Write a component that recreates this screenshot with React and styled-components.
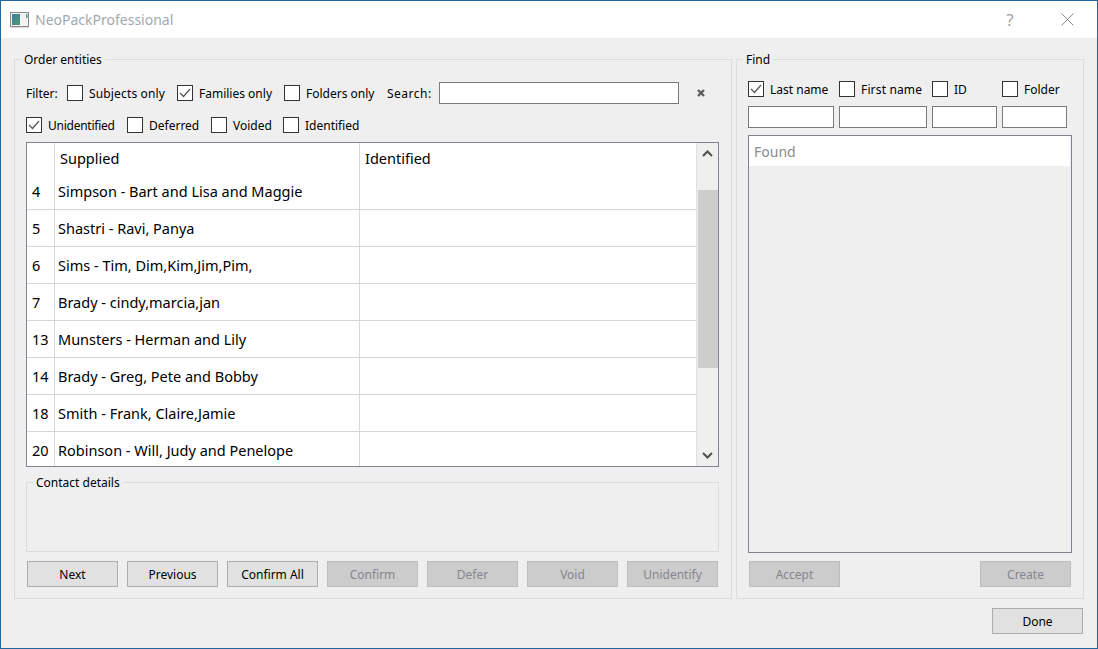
import React from 'react'
import styled, { createGlobalStyle } from 'styled-components'

const GlobalStyle = createGlobalStyle`
  html, body {
    margin: 0;
    padding: 0;
    background: #efefef;
  }
  * {
    box-sizing: border-box;
  }
`;

const Window = styled.div`
  width: 1098px;
  height: 649px;
  display: flex;
  flex-direction: column;
  overflow: hidden;
  border: 1px solid #20659c;
  background: #efefef;
  color: #000;
  font-family: "Noto Sans", "Liberation Sans", sans-serif;
  font-size: 12px;
`;

const TitleBar = styled.div`
  height: 37px;
  flex: none;
  display: flex;
  align-items: center;
  background: #fff;
  padding-left: 9px;
`;

const TitleText = styled.span`
  margin-left: 5px;
  font-size: 14px;
  color: #a3a8ae;
`;

const HelpBtn = styled.span`
  margin-left: auto;
  width: 54px;
  text-align: center;
  font-size: 16px;
  color: #a0a0a0;
`;

const CloseBtn = styled.span`
  width: 60px;
  display: flex;
  justify-content: center;
`;

const Content = styled.div`
  flex: 1;
  display: flex;
  flex-direction: column;
  padding: 21px 14px 0 13px;
`;

const Columns = styled.div`
  display: flex;
  gap: 4px;
`;

const Group = styled.section`
  position: relative;
  flex: none;
  width: ${props => props.$w}px;
  height: ${props => props.$h}px;
  border: 1px solid #dcdcdc;
  padding: ${props => props.$pad || '0'};
`;

const GroupTitle = styled.span`
  position: absolute;
  top: -8px;
  left: 6px;
  padding: 0 3px;
  line-height: 15px;
  background: #efefef;
`;

const FilterRow = styled.div`
  height: 22px;
  display: flex;
  align-items: center;
`;

const StatusRow = styled.div`
  height: 18px;
  margin-top: 12px;
  display: flex;
  align-items: center;
`;

const Label = styled.span`
  flex: none;
  width: ${props => props.$w}px;
  letter-spacing: ${props => props.$track || 0}px;
`;

const CheckItem = styled.label`
  flex: none;
  width: ${props => (props.$w ? `${props.$w}px` : 'auto')};
  height: 16px;
  display: flex;
  align-items: center;
  gap: 6px;
  line-height: 16px;
  white-space: nowrap;
  letter-spacing: ${props => props.$track || 0}px;
`;

const CheckText = styled.span`
  padding-top: 2px;
`;

const Box = styled.span`
  flex: none;
  width: 16px;
  height: 16px;
  display: flex;
  align-items: center;
  justify-content: center;
  background: #fff;
  border: 1px solid #333;
`;

const Input = styled.div`
  flex: none;
  width: ${props => (props.$w ? `${props.$w}px` : 'auto')};
  height: 22px;
  background: #fff;
  border: 1px solid #7a7a7a;
`;

const ClearBtn = styled.span`
  flex: none;
  margin-left: 18px;
  display: flex;
`;

const Table = styled.div`
  margin-top: 8px;
  width: 693px;
  height: 325px;
  display: flex;
  background: #fff;
  border: 1px solid #82858f;
`;

const Rows = styled.div`
  flex: 1;
  overflow: hidden;
`;

const Row = styled.div`
  display: grid;
  grid-template-columns: 28px 305px 1fr;
  height: ${props => (props.$head ? 30 : 37)}px;
  border-bottom: ${props => (props.$head ? 'none' : '1px solid #d6d6d6')};
  font-size: 14.5px;
  line-height: 36px;
`;

const NumCell = styled.div`
  border-right: 1px solid #d9d9d9;
  padding-left: 5px;
`;

const Cell = styled.div`
  border-right: ${props => (props.$last ? 'none' : '1px solid #d9d9d9')};
  padding-left: 3px;
  white-space: nowrap;
`;

const HeadCell = styled(Cell)`
  padding-left: 5px;
  line-height: 30px;
`;

const ScrollBar = styled.div`
  flex: none;
  width: 22px;
  display: flex;
  flex-direction: column;
  background: #efefef;
  border-left: 1px solid #e0e0e0;
`;

const Arrow = styled.div`
  height: 21px;
  flex: none;
  display: flex;
  align-items: center;
  justify-content: center;
`;

const Thumb = styled.div`
  margin: 26px 0 0 1px;
  height: 178px;
  background: #cdcdcd;
`;

const ScrollGap = styled.div`
  flex: 1;
`;

const ContactGroup = styled(Group)`
  margin-top: 15px;
`;

const ButtonRow = styled.div`
  margin-top: 9px;
  margin-left: 1px;
  display: flex;
  gap: 9px;
`;

const FindButtons = styled(ButtonRow)`
  margin-top: 8px;
  width: 322px;
  justify-content: space-between;
`;

const Button = styled.button`
  flex: none;
  width: 91px;
  height: 26px;
  padding: 0;
  font: inherit;
  color: ${props => (props.disabled ? '#85868c' : '#000')};
  background: ${props => (props.disabled ? '#cccccc' : '#e1e1e1')};
  border: 1px solid ${props => (props.disabled ? '#bdbdbd' : '#adadad')};
`;

const FindGrid = styled.div`
  display: grid;
  grid-template-columns: 86px 88px 65px 65px;
  column-gap: 5px;
  row-gap: 9px;
`;

const FoundList = styled.div`
  margin-top: 7px;
  width: 324px;
  height: 418px;
  border: 1px solid #82828f;
  padding-right: 1px;
`;

const FoundHead = styled.div`
  height: 30px;
  padding-left: 5px;
  background: #fff;
  color: #8b8b8b;
  font-size: 14px;
  line-height: 32px;
`;

const Footer = styled.div`
  margin-top: 9px;
  display: flex;
  justify-content: flex-end;
`;

const entries = [
  [4, 'Simpson - Bart and Lisa and Maggie'],
  [5, 'Shastri - Ravi, Panya'],
  [6, 'Sims - Tim, Dim,Kim,Jim,Pim,'],
  [7, 'Brady - cindy,marcia,jan'],
  [13, 'Munsters - Herman and Lily'],
  [14, 'Brady - Greg, Pete and Bobby'],
  [18, 'Smith - Frank, Claire,Jamie'],
  [20, 'Robinson - Will, Judy and Penelope'],
];

const AppIcon = () => (
  <svg width="20" height="16" viewBox="0 0 20 16">
    <defs>
      <linearGradient id="pane" x1="0" y1="0" x2="1" y2="1">
        <stop offset="0" stopColor="#3d7fa0" />
        <stop offset="1" stopColor="#4f9a6d" />
      </linearGradient>
    </defs>
    <rect x="0.5" y="0.5" width="18" height="14" fill="#f2f2f2" stroke="#8a8a8a" />
    <rect x="2" y="2" width="8" height="11" fill="url(#pane)" />
    <rect x="16" y="2" width="1.5" height="4" fill="#4c9aa0" />
    <rect x="1" y="15" width="18" height="1" fill="#d8d8d8" />
  </svg>
);

const CloseIcon = () => (
  <svg width="13" height="13" viewBox="0 0 13 13">
    <path d="M0.5 0.5L12.5 12.5M12.5 0.5L0.5 12.5" stroke="#8c8c8c" strokeWidth="1" fill="none" />
  </svg>
);

const ClearIcon = () => (
  <svg width="8" height="8" viewBox="0 0 8 8">
    <path d="M1 1L7 7M7 1L1 7" stroke="#5c5c5c" strokeWidth="2.4" fill="none" />
  </svg>
);

const Chevron = ({ down }) => (
  <svg width="11" height="7" viewBox="0 0 11 7">
    <path d={down ? 'M1 1L5.5 5.5L10 1' : 'M1 6L5.5 1.5L10 6'} stroke="#505050" strokeWidth="2" fill="none" />
  </svg>
);

const Check = ({ label, checked, w, track }) => (
  <CheckItem $w={w} $track={track}>
    <Box>
      {checked && (
        <svg width="12" height="10" viewBox="0 0 12 10">
          <path d="M1 5L4.5 8.5L11 1" stroke="#555" strokeWidth="1.2" fill="none" />
        </svg>
      )}
    </Box>
    <CheckText>{label}</CheckText>
  </CheckItem>
);

const App = () => {
  return (
    <>
      <GlobalStyle />
      <Window>
        <TitleBar>
          <AppIcon />
          <TitleText>NeoPackProfessional</TitleText>
          <HelpBtn>?</HelpBtn>
          <CloseBtn><CloseIcon /></CloseBtn>
        </TitleBar>
        <Content>
          <Columns>
            <Group $w={718} $h={540} $pad="22px 0 0 11px">
              <GroupTitle>Order entities</GroupTitle>
              <FilterRow>
                <Label $w={41}>Filter:</Label>
                <Check w={110} label="Subjects only" track={0.15} />
                <Check w={107} label="Families only" checked />
                <Check w={103} label="Folders only" />
                <Label $w={52} $track={0.5}>Search:</Label>
                <Input $w={240} />
                <ClearBtn><ClearIcon /></ClearBtn>
              </FilterRow>
              <StatusRow>
                <Check w={101} label="Unidentified" checked track={-0.25} />
                <Check w={84} label="Deferred" />
                <Check w={72} label="Voided" />
                <Check label="Identified" />
              </StatusRow>
              <Table>
                <Rows>
                  <Row $head>
                    <NumCell />
                    <HeadCell>Supplied</HeadCell>
                    <HeadCell $last>Identified</HeadCell>
                  </Row>
                  {entries.map(([num, name]) => (
                    <Row key={num}>
                      <NumCell>{num}</NumCell>
                      <Cell>{name}</Cell>
                      <Cell $last />
                    </Row>
                  ))}
                </Rows>
                <ScrollBar>
                  <Arrow><Chevron /></Arrow>
                  <Thumb />
                  <ScrollGap />
                  <Arrow><Chevron down /></Arrow>
                </ScrollBar>
              </Table>
              <ContactGroup $w={693} $h={70}>
                <GroupTitle>Contact details</GroupTitle>
              </ContactGroup>
              <ButtonRow>
                <Button>Next</Button>
                <Button>Previous</Button>
                <Button>Confirm All</Button>
                <Button disabled>Confirm</Button>
                <Button disabled>Defer</Button>
                <Button disabled>Void</Button>
                <Button disabled>Unidentify</Button>
              </ButtonRow>
            </Group>
            <Group $w={348} $h={540} $pad="21px 0 0 11px">
              <GroupTitle>Find</GroupTitle>
              <FindGrid>
                <Check label="Last name" checked />
                <Check label="First name" track={0.15} />
                <Check label="ID" />
                <Check label="Folder" />
                <Input />
                <Input />
                <Input />
                <Input />
              </FindGrid>
              <FoundList>
                <FoundHead>Found</FoundHead>
              </FoundList>
              <FindButtons>
                <Button disabled>Accept</Button>
                <Button disabled>Create</Button>
              </FindButtons>
            </Group>
          </Columns>
          <Footer>
            <Button>Done</Button>
          </Footer>
        </Content>
      </Window>
    </>
  )
}

export default App
